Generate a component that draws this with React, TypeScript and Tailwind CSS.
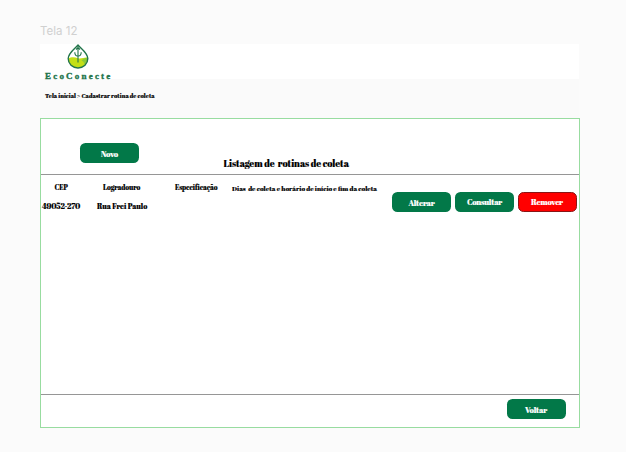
import type { ReactNode } from "react";

const serif =
  "font-['Abril_Fatface','Liberation_Serif',serif] font-normal whitespace-pre [-webkit-text-stroke:0.12px_currentColor]";

function Button({ children, className = "" }: { children: ReactNode; className?: string }) {
  return (
    <button
      className={`flex h-5 w-[59px] shrink-0 items-center justify-center rounded-[5.5px] text-[8px] leading-none tracking-[-0.2px] text-white ${serif} ${className}`}
    >
      {children}
    </button>
  );
}

function Logo() {
  return (
    <div className="ml-[5px] flex w-[67px] flex-col">
      <svg className="ml-[22px] h-[25px] w-[22px]" viewBox="0 0 22 25" fill="none">
        <path d="M1.5 14.5C5 12.6 8 13.4 11 14.2C14 15 17 13.2 20.5 13.5C20.5 19.5 16.5 23.7 11 23.7C5.5 23.7 1.5 19.8 1.5 14.5Z" fill="#c3df16" />
        <path d="M14.5 16.5C17 14.2 18.8 13.5 20.5 13.5C20.5 16.8 19.2 19.6 17.6 21C17.4 19 16.4 17.4 14.5 16.5Z" fill="#8ccb35" />
        <path d="M11 1C8 4.5 1.2 8.8 1.2 14.6C1.2 20 5.4 24 11 24C16.6 24 20.8 20 20.8 14.6C20.8 8.8 14 4.5 11 1Z" stroke="#21744a" strokeWidth="1.4" strokeLinejoin="round" />
        <path d="M11 1.5V18.5M7.8 8.2C7.8 10.8 9 12 11 12.2C13 12 14.2 10.8 14.2 8.2M9 5.5L11 3.5L13 5.5" stroke="#21744a" strokeWidth="1.1" />
      </svg>
      <span className="mt-[2px] w-[67px] whitespace-nowrap font-['Liberation_Serif',serif] text-[9px] leading-[10px] font-bold tracking-[2.2px] text-[#21744a] [-webkit-text-stroke:0.35px_#21744a]">
        EcoConecte
      </span>
    </div>
  );
}

export default function App() {
  return (
    <main className="h-[452px] w-[626px] overflow-hidden bg-[#fbfbfb] pl-10 text-black">
      <h2 className="h-11 pt-[23px] font-['Inter',sans-serif] text-[11.5px] leading-[16px] text-[#d0d0d0]">Tela 12</h2>
      <header className="h-[35px] w-[539px] bg-white">
        <Logo />
      </header>
      <nav className={`h-[39px] w-[539px] bg-[#fafafa] pt-[13px] pl-[5px] text-[6px] leading-[8px] tracking-[0.03px] ${serif}`}>
        Tela inicial &gt; Cadastrar rotina de coleta
      </nav>
      <section className="flex h-[310px] w-[540px] flex-col border border-[#98dca0] bg-white">
        <div className="flex h-[56px] shrink-0 border-b border-[#969696] pl-[39px]">
          <Button className="mt-[24px] bg-[#027848] pt-px">Novo</Button>
          <h1 className={`mt-[39px] ml-[84.5px] text-[9.5px] leading-[12px] tracking-[-0.07px] ${serif}`}>Listagem de  rotinas de coleta</h1>
        </div>
        <div className="flex h-[219px] shrink-0">
          <div className="flex w-[351px] flex-col">
            <div className={`flex h-[22px] pt-[8px] text-[7px] leading-[10px] tracking-[-0.1px] ${serif}`}>
              <span className="w-[62px] pl-[13.5px]">CEP</span>
              <span className="w-[72px]">Logradouro</span>
              <span className="w-[57px]">Especificação</span>
              <span className="pt-px text-[6.7px] tracking-[0px]">Dias  de coleta e horário de início e fim da coleta</span>
            </div>
            <div className={`flex pt-[4px] text-[8px] leading-[10px] ${serif}`}>
              <span className="w-[56px] pl-px tracking-[-0.25px]">49052-270</span>
              <span className="text-[7.5px] leading-[11px]">Rua Frei Paulo</span>
            </div>
          </div>
          <div className="flex gap-[4px] pt-[17px]">
            <Button className="bg-[#027848] pt-px">Alterar</Button>
            <Button className="bg-[#027848]">Consultar</Button>
            <Button className="-ml-[0.5px] border border-[#8a1515] bg-[#ff0000]">Remover</Button>
          </div>
        </div>
        <footer className="flex flex-1 justify-end border-t border-[#969696] pt-[4px] pr-[13.5px]">
          <Button className="bg-[#027848] pt-px">Voltar</Button>
        </footer>
      </section>
    </main>
  );
}
